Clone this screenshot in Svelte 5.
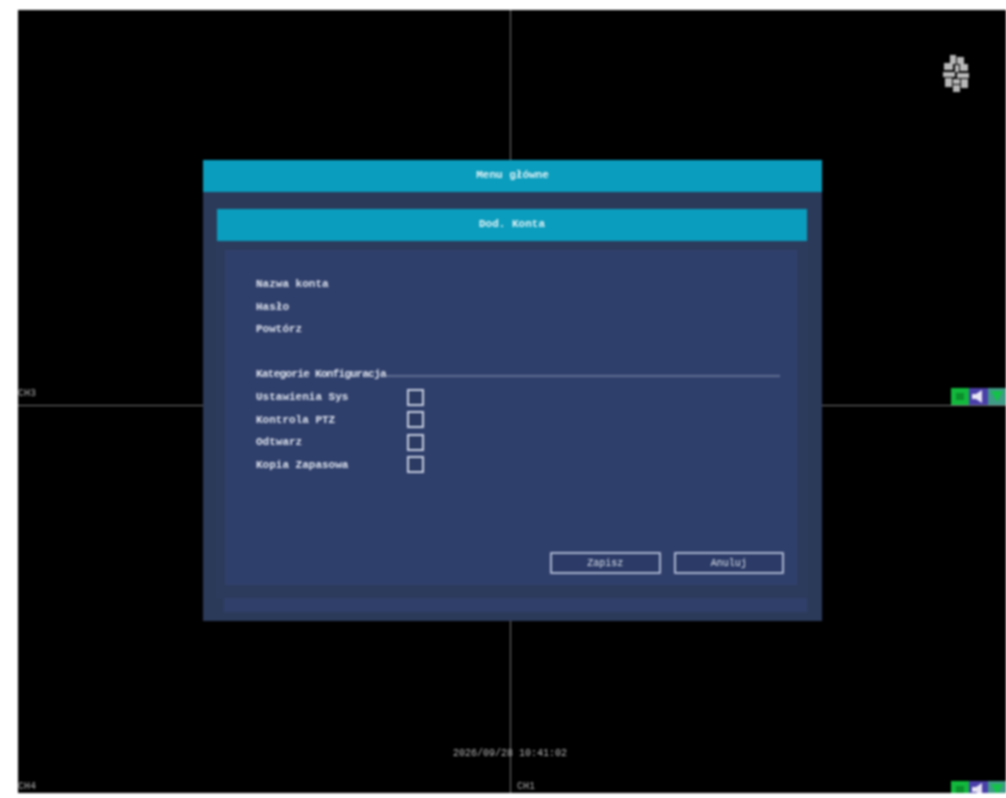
<script lang="ts">
  const accountFields = ["Nazwa konta", "Hasło", "Powtórz"];
  const permissions = ["Ustawienia Sys", "Kontrola PTZ", "Odtwarz", "Kopia Zapasowa"];
</script>

{#snippet statusIcons()}
  <div class="status-icons">
    <svg width="55" height="17" viewBox="0 0 55 17">
      <rect width="18" height="17" fill="#12b83c" />
      <rect x="5" y="5" width="8" height="7" fill="#0a8f2c" />
      <rect x="18" width="19" height="17" fill="#4a3fa8" />
      <path d="M21 6h4l6-4v13l-6-4h-4z" fill="#e8e4f4" />
      <rect x="37" width="18" height="17" fill="#3f9a86" />
      <path d="M40 3h12l-6 11z" fill="#14c24a" />
    </svg>
  </div>
{/snippet}

<div class="screen">
  <div class="quad">
    <section class="cell top-left"><span class="ch">CH3</span></section>
    <section class="cell top-right">
      <svg class="logo" width="28" height="40" viewBox="0 0 28 40">
        <g fill="#b8b8b8">
          <rect x="8" y="0" width="6" height="9" />
          <rect x="15" y="2" width="7" height="7" />
          <rect x="2" y="8" width="9" height="7" />
          <rect x="13" y="10" width="4" height="7" />
          <rect x="18" y="9" width="8" height="7" />
          <rect x="1" y="17" width="12" height="5" />
          <rect x="15" y="18" width="12" height="5" />
          <rect x="3" y="23" width="7" height="9" />
          <rect x="11" y="24" width="7" height="5" />
          <rect x="19" y="24" width="7" height="9" />
          <rect x="11" y="30" width="7" height="7" />
        </g>
      </svg>
      {@render statusIcons()}
    </section>
    <section class="cell bottom-left"><span class="ch">CH4</span></section>
    <section class="cell bottom-right">
      <span class="ch">CH1</span>
      {@render statusIcons()}
    </section>
  </div>

  <div class="clock">2026/09/28 10:41:02</div>

  <div class="dialog">
    <div class="title-bar">Menu główne</div>
    <div class="dialog-body">
      <div class="title-bar">Dod. Konta</div>
      <div class="panel-frame">
        <div class="panel">
          <div class="fields">
            {#each accountFields as field}
              <div class="row">{field}</div>
            {/each}
          </div>
          <div class="section-head">
            <span>Kategorie Konfiguracja</span>
            <i></i>
          </div>
          <div class="permissions">
            {#each permissions as item}
              <div class="row">
                <span class="perm-name">{item}</span>
                <span class="checkbox"></span>
              </div>
            {/each}
          </div>
          <div class="actions">
            <button type="button">Zapisz</button>
            <button type="button">Anuluj</button>
          </div>
        </div>
      </div>
      <div class="bottom-strip"></div>
    </div>
  </div>
</div>

<style>
  :global(body) {
    background: #fff;
  }

  .screen {
    position: relative;
    box-sizing: border-box;
    width: 988px;
    height: 783px;
    margin: 10px 0 5px 18px;
    background: #000;
    font-family: "Liberation Mono", monospace;
    font-size: 11px;
    font-weight: 700;
    color: #dfe4ee;
    filter: blur(1px);
    overflow: hidden;
  }

  .quad {
    display: grid;
    grid-template-columns: 493px 495px;
    grid-template-rows: 396px 387px;
    height: 100%;
  }

  .cell {
    position: relative;
    display: flex;
    align-items: flex-end;
    justify-content: space-between;
    box-sizing: border-box;
  }

  .top-left {
    border-right: 1px solid #777;
    border-bottom: 1px solid #777;
  }

  .top-right {
    border-bottom: 1px solid #777;
  }

  .bottom-left {
    border-right: 1px solid #777;
  }

  .ch {
    font-size: 10px;
    font-weight: 400;
    color: #aaa;
    line-height: 12px;
  }

  .top-left .ch {
    margin-bottom: 5px;
  }

  .bottom-right .ch {
    margin-left: 6px;
  }

  .logo {
    position: absolute;
    top: 45px;
    right: 36px;
  }

  .status-icons {
    position: absolute;
    right: 0;
    bottom: 0;
    height: 17px;
    line-height: 0;
  }

  .bottom-right .status-icons {
    height: 12px;
    overflow: hidden;
  }

  .clock {
    position: absolute;
    left: 435px;
    top: 738px;
    font-size: 10px;
    font-weight: 400;
    color: #b8b8b8;
    white-space: nowrap;
  }

  .dialog {
    position: absolute;
    left: 185px;
    top: 150px;
    display: flex;
    flex-direction: column;
    width: 619px;
    height: 461px;
    background: #2c3a5a;
  }

  .title-bar {
    flex: none;
    height: 32px;
    line-height: 30px;
    text-align: center;
    background: #0a9dbd;
    color: #e6f4f8;
  }

  .dialog-body {
    flex: 1;
    display: flex;
    flex-direction: column;
    padding: 17px 15px 0 14px;
    min-height: 0;
  }

  .panel-frame {
    height: 357px;
    box-sizing: border-box;
    padding: 9px 10px 13px 8px;
    background: #2c3b5c;
  }

  .panel {
    height: 100%;
    box-sizing: border-box;
    padding: 23px 17px 0 31px;
    display: flex;
    flex-direction: column;
    background: #2f3f6b;
  }

  .row {
    display: flex;
    align-items: center;
    height: 22.4px;
  }

  .fields {
    margin-bottom: 23px;
  }

  .section-head {
    display: flex;
    align-items: center;
    height: 22px;
    margin-bottom: 1px;
    letter-spacing: -0.7px;
  }

  .section-head i {
    flex: 1;
    height: 2px;
    margin-top: 3px;
    background: #5d6d91;
  }

  .perm-name {
    width: 151px;
  }

  .checkbox {
    box-sizing: border-box;
    width: 17px;
    height: 17px;
    border: 2px solid #c5cde0;
    background: #2b3a62;
  }

  .actions {
    display: flex;
    justify-content: flex-end;
    gap: 13px;
    margin-top: auto;
    margin-bottom: 11px;
    margin-right: -4px;
  }

  button {
    width: 110.5px;
    height: 22px;
    padding: 0;
    border: 2px solid #aab4d0;
    border-radius: 1px;
    background: #2b3a66;
    color: #dfe4ee;
    font: inherit;
    font-size: 10px;
    font-weight: 400;
  }

  .bottom-strip {
    height: 14px;
    margin: 0 0 0 7px;
    background: #2f3f69;
  }
</style>
